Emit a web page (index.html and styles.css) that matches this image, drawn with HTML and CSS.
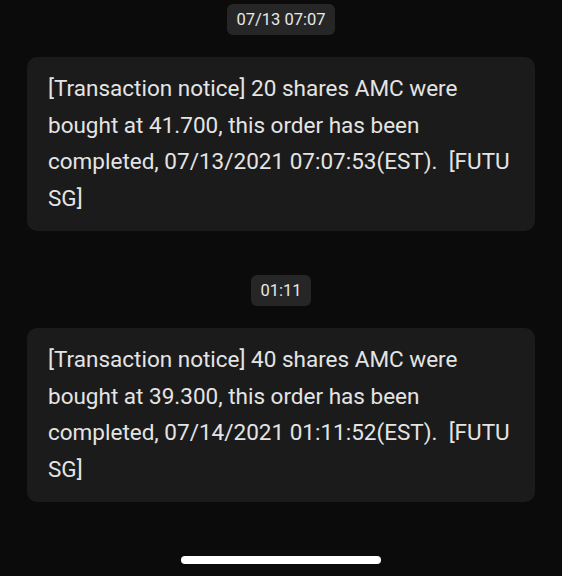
FILE: index.html
```html
<!DOCTYPE html>
<html>
<head>
<meta charset="utf-8">
<link rel="stylesheet" href="styles.css">
</head>
<body>
<div class="screen">
  <div class="thread">
    <div class="msg first">
      <div class="time"><span class="pill">07/13 07:07</span></div>
      <div class="card">[Transaction notice] 20 shares AMC were bought at 41.700, this order has been completed, 07/13/2021 07:07:53(EST).&nbsp; [FUTU SG]</div>
    </div>
    <div class="msg">
      <div class="time"><span class="pill">01:11</span></div>
      <div class="card">[Transaction notice] 40 shares AMC were bought at 39.300, this order has been completed, 07/14/2021 01:11:52(EST).&nbsp; [FUTU SG]</div>
    </div>
  </div>
  <div class="home-bar"></div>
</div>
</body>
</html>
```
FILE: styles.css
```css
html, body {
  margin: 0;
  padding: 0;
  background: #0b0b0b;
}
.screen {
  width: 562px;
  height: 576px;
  display: flex;
  flex-direction: column;
  font-family: Roboto, "Liberation Sans", sans-serif;
  color: #e6e6e6;
}
.thread {
  flex: 1;
  padding: 0 27px;
}
.msg {
  display: flex;
  flex-direction: column;
  padding-top: 44px;
}
.msg.first {
  padding-top: 4px;
}
.time {
  display: flex;
  justify-content: center;
  margin-bottom: 22px;
}
.pill {
  background: #262626;
  border-radius: 6px;
  font-size: 16.5px;
  line-height: 31px;
  height: 31px;
  padding: 0 9px;
  color: #e8e8e8;
}
.card {
  background: #1b1b1b;
  border-radius: 10px;
  padding: 13px 20px 15px 21px;
  font-size: 22.5px;
  line-height: 36.5px;
  color: #e4e4e4;
}
.home-bar {
  align-self: center;
  width: 200px;
  height: 8px;
  border-radius: 4px;
  background: #ffffff;
  margin-bottom: 12px;
}
```
